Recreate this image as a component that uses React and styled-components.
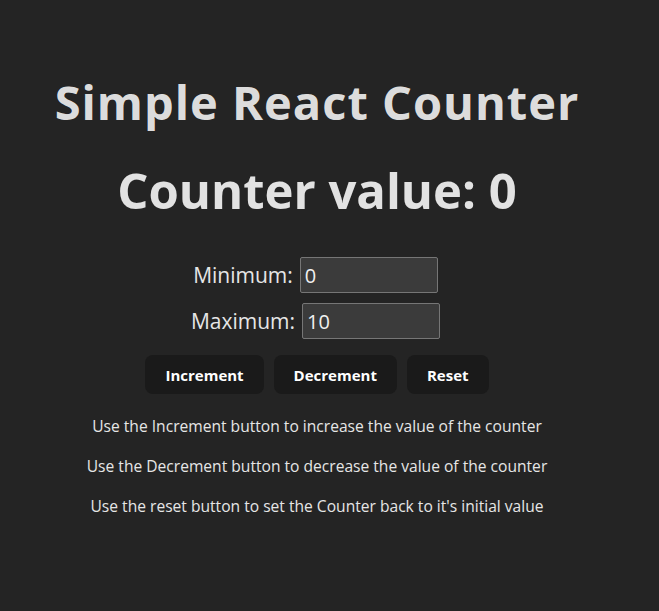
import { useState } from 'react'
import styled, { createGlobalStyle } from 'styled-components';

const GlobalStyle = createGlobalStyle`
    body {
        margin: 0;
        background: #242424;
        color: rgba(255, 255, 255, 0.87);
        font-family: "Open Sans", "Noto Sans", sans-serif;
    }
`;

const Counter = () => {
    const [count, setCount] = useState(0);
    const [limits, setLimits] = useState({ min: '0', max: '10' });

    const handleChange = (e) => {
        setLimits({ ...limits, [e.target.name]: e.target.value });
    };

    const increment = () => setCount((c) => Math.min(c + 1, Number(limits.max)));
    const decrement = () => setCount((c) => Math.max(c - 1, Number(limits.min)));
    const reset = () => setCount(Number(limits.min) || 0);

    return (
        <Wrapper>
            <Title>Simple React Counter</Title>
            <Value>Counter value: {count}</Value>
            <Field $first>
                <label htmlFor="min">Minimum:</label>
                <Input id="min" name="min" value={limits.min} onChange={handleChange} />
            </Field>
            <Field>
                <label htmlFor="max">Maximum:</label>
                <Input id="max" name="max" value={limits.max} onChange={handleChange} />
            </Field>
            <Buttons>
                <Button onClick={increment}>Increment</Button>
                <Button onClick={decrement}>Decrement</Button>
                <Button onClick={reset}>Reset</Button>
            </Buttons>
            <Help>Use the Increment button to increase the value of the counter</Help>
            <Help>Use the Decrement button to decrease the value of the counter</Help>
            <Help>Use the reset button to set the Counter back to it&apos;s initial value</Help>
        </Wrapper>
    )
}

const Wrapper = styled.main`
    display: flex;
    flex-direction: column;
    align-items: center;
    padding: 68px 25px 0 0;
    text-align: center;
`;

const Title = styled.h1`
    margin: 0;
    font-size: 47px;
    line-height: 68px;
    font-weight: 700;
    letter-spacing: 1px;
`;

const Value = styled.h2`
    margin: 20px 0 0;
    font-size: 49px;
    line-height: 68px;
    font-weight: 700;
`;

const Field = styled.div`
    display: flex;
    align-items: center;
    gap: 7px;
    margin: ${({ $first }) => ($first ? '33px' : '10px')} 3px 0 0;
    font-size: 21px;
    color: #e6e6e6;
`;

const Input = styled.input`
    width: 138px;
    height: 36px;
    box-sizing: border-box;
    padding: 0 4px;
    background: #3b3b3b;
    color: #f0f0f0;
    border: 1px solid #767676;
    border-radius: 2px;
    font-family: inherit;
    font-size: 20px;
`;

const Buttons = styled.div`
    display: flex;
    gap: 10px;
    margin: 16px 0 12px;
`;

const Button = styled.button`
    height: 39px;
    padding: 0 19px;
    border: 1px solid transparent;
    border-radius: 8px;
    background: #1a1a1a;
    color: #fff;
    font-family: inherit;
    font-size: 15px;
    font-weight: 700;
    cursor: pointer;
`;

const Help = styled.p`
    margin: 0;
    font-size: 15.6px;
    line-height: 40px;
    color: #e6e6e6;
`;

const App = () => (
    <>
        <GlobalStyle />
        <Counter />
    </>
);

export default App;
